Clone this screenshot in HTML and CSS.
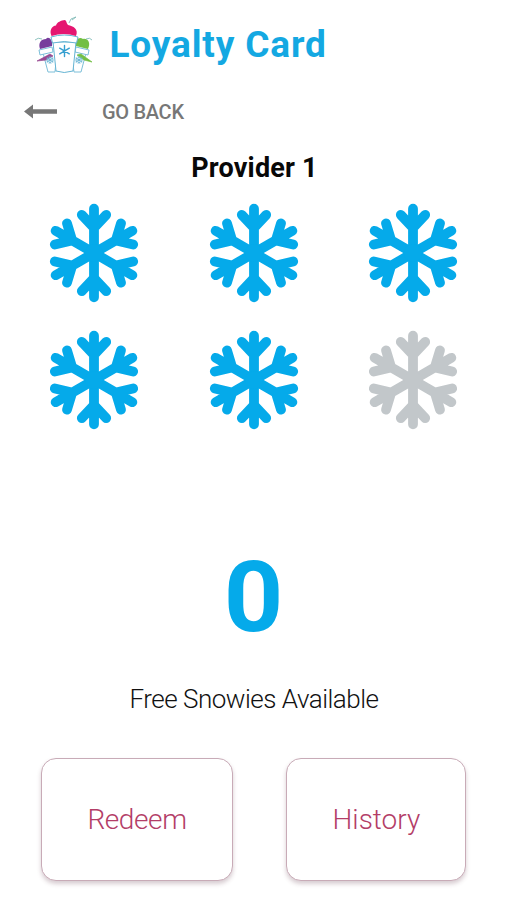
FILE: index.html
```html
<!DOCTYPE html>
<html lang="en">
<head>
<meta charset="utf-8">
<title>Loyalty Card</title>
<link rel="stylesheet" href="styles.css">
</head>
<body>
<svg class="defs" width="0" height="0" aria-hidden="true">
  <defs>
    <path id="arm" d="M0 0V-44.3M-12.2-38.2L0-25.2L12.2-38.2"/>
    <symbol id="flake" viewBox="-50 -50 100 100">
      <g fill="none" stroke="currentColor" stroke-width="9.8" stroke-linecap="round">
        <use href="#arm"/><use href="#arm" transform="rotate(60)"/><use href="#arm" transform="rotate(120)"/>
        <use href="#arm" transform="rotate(180)"/><use href="#arm" transform="rotate(240)"/><use href="#arm" transform="rotate(300)"/>
      </g>
      <circle r="9" fill="currentColor"/>
    </symbol>
  </defs>
</svg>
<main class="screen">
  <header class="header">
    <svg class="logo" viewBox="0 0 64 62">
      <g fill="#fff" stroke="#7cbfd9" stroke-width="1" stroke-linejoin="round">
        <path d="M10 33L15 52H22L24 30M53 33L48 52H41L38 30"/>
        <path d="M6 30L19 27L20 32L7 35ZM43 27L56 30L55 35L42 32Z"/>
      </g>
      <path d="M7 29C5 23 8 19 13 19C15 16 20 19 19 26Z" fill="#773c9c"/>
      <path d="M43 26C42 20 46 16 50 19C55 18 58 23 55 29Z" fill="#72bf44"/>
      <path d="M4 41L17 34L20 36L13 40Z" fill="#984891" stroke="#984891" stroke-width=".7"/>
      <path d="M44 35L48 34L59 42L51 40Z" fill="#72bf44" stroke="#72bf44" stroke-width=".7"/>
      <use href="#flake" x="13" y="36" width="8" height="8" color="#6ab5d5"/>
      <use href="#flake" x="42" y="36" width="8" height="8" color="#6ab5d5"/>
      <path d="M20 22L23 51Q31 54 40 51L43 22Z" fill="#fff" stroke="#65b4d3"/>
      <path d="M18 17Q31 13 45 17L43.5 23Q31 20 19.5 23Z" fill="#fff" stroke="#65b4d3"/>
      <path d="M18.5 16C16 10 19 6 23 5.5C24 2 28 .5 32 0C34 1 33 3 35 5C40 6 46 9 43 16Q31 12 18.5 16Z" fill="#e51670"/>
      <path d="M36 3L38-1L43-3M39 0L43-3M2 20Q5 17 9 19M53 19Q57 17 59 20" fill="none" stroke="#81bbb8" stroke-width=".9"/>
      <path d="M31.5 25.5V36.5M26.7 28.2L36.3 33.8M36.3 28.2L26.7 33.8" stroke="#359fd0" stroke-width="1.4" stroke-linecap="round"/>
    </svg>
    <h1 class="title">Loyalty Card</h1>
  </header>
  <nav class="back">
    <svg class="arrow" viewBox="0 0 34 16"><path d="M0 7.5L9 .5V5.3H33V9.7H9V14.5Z" fill="#777"/></svg>
    <span class="back-label">GO BACK</span>
  </nav>
  <h2 class="provider">Provider 1</h2>
  <section class="stamps">
    <svg class="stamp"><use href="#flake"/></svg>
    <svg class="stamp"><use href="#flake"/></svg>
    <svg class="stamp"><use href="#flake"/></svg>
    <svg class="stamp"><use href="#flake"/></svg>
    <svg class="stamp"><use href="#flake"/></svg>
    <svg class="stamp empty"><use href="#flake"/></svg>
  </section>
  <div class="count">0</div>
  <p class="caption">Free Snowies Available</p>
  <div class="actions">
    <button class="button redeem">Redeem</button>
    <button class="button history">History</button>
  </div>
</main>
</body>
</html>
```
FILE: styles.css
```css
* { box-sizing: border-box; }
body { margin: 0; background: #fff; font-family: Roboto, "Liberation Sans", sans-serif; }
.defs { display: block; }
.screen { width: 507px; height: 900px; overflow: hidden; display: flex; flex-direction: column; }
.header { height: 90px; padding-left: 33px; display: flex; align-items: flex-start; }
.logo { width: 64px; height: 62px; margin-top: 20px; overflow: visible; }
.title { margin: 23px 0 0 12.5px; font-size: 37px; line-height: 44px; font-weight: 700; letter-spacing: .85px; color: #14a8e2; white-space: nowrap; }
.back { height: 44px; padding-left: 24px; display: flex; align-items: center; }
.arrow { width: 34px; height: 16px; }
.back-label { margin-left: 44px; font-size: 20px; font-weight: 500; color: #777; letter-spacing: -.3px; }
.provider { margin: 16px 0 0; padding-left: 2px; height: 36px; line-height: 36px; font-size: 27px; font-weight: 700; letter-spacing: .2px; color: #080808; text-align: center; }
.stamps { margin-top: 17.4px; padding-left: 44.4px; display: grid; grid-template-columns: repeat(3, 100px); column-gap: 59.4px; row-gap: 26.4px; }
.stamp { width: 100px; height: 100px; color: #05aaea; }
.empty { color: #c2c7ca; }
.count { margin-top: 106.2px; height: 124px; line-height: 124px; font-size: 98px; font-weight: 700; color: #05aaea; text-align: center; transform: scaleX(1.06); }
.caption { margin: 17px 0 0; padding-left: 1px; height: 44px; line-height: 44px; font-size: 26px; font-weight: 300; letter-spacing: -.5px; color: #111; text-align: center; }
.actions { margin-top: 37px; padding-left: 41px; display: grid; grid-template-columns: 192px 180px; column-gap: 53.4px; }
.button { height: 123px; padding: 0; border: 1px solid #c8abb7; border-radius: 15px; background: #fff; color: #b33d67; font: 300 28px Roboto, sans-serif; box-shadow: 0 3px 4px rgba(100, 55, 75, .25); }
.redeem { letter-spacing: -.4px; }
```
